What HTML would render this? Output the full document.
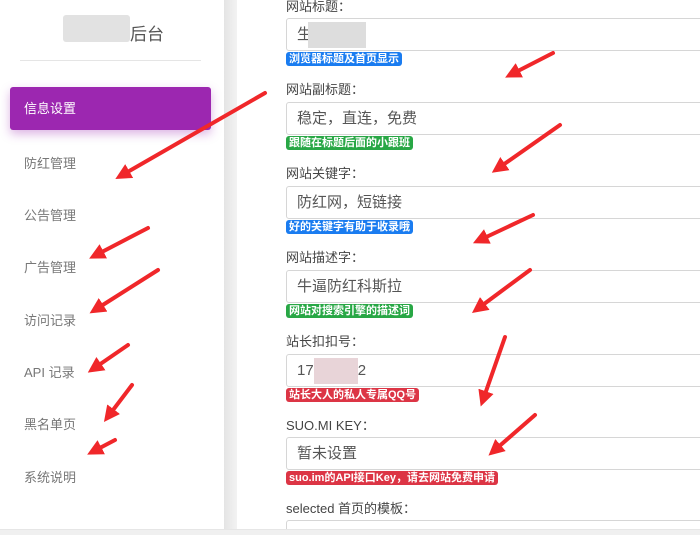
<!DOCTYPE html><html><head><meta charset="utf-8"><style>
html,body{margin:0;width:700px;height:535px;overflow:hidden}
body{background:#fff;font-family:"Liberation Sans","Noto Sans CJK SC",sans-serif;position:relative}
.side{position:absolute;left:0;top:0;width:224px;height:530px;background:#fff}
.gap{position:absolute;left:224px;top:0;width:13px;height:530px;background:linear-gradient(90deg,#e4e4e4,#f3f3f3)}
.bot{position:absolute;left:0;top:529px;width:700px;height:6px;background:#f0f0f0;border-top:1px solid #e6e6e6}
.t{position:absolute;left:130px;top:20px;font-size:17px;color:#555}
.blur{position:absolute;left:63px;top:15px;width:67px;height:27px;background:#e2e2e2;border-radius:3px}
.hr{position:absolute;left:20px;top:60px;width:181px;height:1px;background:#e5e5e5}
.act{position:absolute;left:10px;top:87px;width:201px;height:43px;background:#9c27b0;border-radius:3px;box-shadow:0 4px 10px rgba(156,39,176,.35);color:#fff;font-size:13px;line-height:43px;text-indent:14px}
.m{position:absolute;left:24px;font-size:13px;color:#777}
.lb{position:absolute;left:286px;font-size:13px;color:#444}
.in{position:absolute;left:286px;width:430px;height:33px;border:1px solid #d6d6d6;border-radius:3px;font-size:15px;color:#555;line-height:31px;text-indent:10px;box-sizing:border-box;overflow:hidden}
.bd{position:absolute;left:286px;height:14px;font-size:11px;font-weight:bold;color:#fff;line-height:14px;padding:0 3px;border-radius:3px}
</style></head><body>
<div class="side">
<div class="blur"></div><div class="t">后台</div><div class="hr"></div>
<div class="act">信息设置</div>
<div class="m" style="top:153px">防红管理</div>
<div class="m" style="top:205px">公告管理</div>
<div class="m" style="top:257px">广告管理</div>
<div class="m" style="top:310px">访问记录</div>
<div class="m" style="top:362px">API 记录</div>
<div class="m" style="top:414px">黑名单页</div>
<div class="m" style="top:467px">系统说明</div>
</div>
<div class="gap"></div>
<div class="lb" style="top:-4px">网站标题：</div>
<div class="in" style="top:18px">生<span style="display:inline-block;width:58px;height:26px;background:#ddd;vertical-align:middle;margin-left:-4px"></span></div>
<div class="bd" style="top:52px;background:#1a7cf0">浏览器标题及首页显示</div>
<div class="lb" style="top:79px">网站副标题：</div>
<div class="in" style="top:102px">稳定，直连，免费</div>
<div class="bd" style="top:136px;background:#28a745">跟随在标题后面的小跟班</div>
<div class="lb" style="top:163px">网站关键字：</div>
<div class="in" style="top:186px">防红网，短链接</div>
<div class="bd" style="top:220px;background:#1a7cf0">好的关键字有助于收录哦</div>
<div class="lb" style="top:247px">网站描述字：</div>
<div class="in" style="top:270px">牛逼防红科斯拉</div>
<div class="bd" style="top:304px;background:#28a745">网站对搜索引擎的描述词</div>
<div class="lb" style="top:331px">站长扣扣号：</div>
<div class="in" style="top:354px">17<span style="display:inline-block;width:44px;height:26px;background:#e8d4d8;vertical-align:middle"></span>2</div>
<div class="bd" style="top:388px;background:#dc3545">站长大人的私人专属QQ号</div>
<div class="lb" style="top:415px">SUO.MI KEY：</div>
<div class="in" style="top:437px">暂未设置</div>
<div class="bd" style="top:471px;background:#dc3545">suo.im的API接口Key，请去网站免费申请</div>
<div class="lb" style="top:498px">selected 首页的模板：</div>
<div class="in" style="top:520px"></div>
<div class="bot"></div>
<svg width="700" height="535" style="position:absolute;left:0;top:0">
<defs><marker id="a" markerWidth="4" markerHeight="4" refX="1.5" refY="2" orient="auto"><path d="M0,0L4,2L0,4z" fill="#f0272a"/></marker></defs>
<g stroke="#f0272a" stroke-width="4" fill="none" marker-end="url(#a)" stroke-linecap="round">
<path d="M265,93L124,174"/><path d="M148,228L98,254"/><path d="M158,270L98,308"/><path d="M128,345L96,367"/><path d="M132,385L110,414"/><path d="M115,440L96,450"/>
<path d="M553,53L514,73"/><path d="M560,125L500,167"/><path d="M533,215L482,239"/><path d="M530,270L480,307"/><path d="M505,337L484,397"/><path d="M535,415L496,449"/>
</g></svg>
</body></html>
